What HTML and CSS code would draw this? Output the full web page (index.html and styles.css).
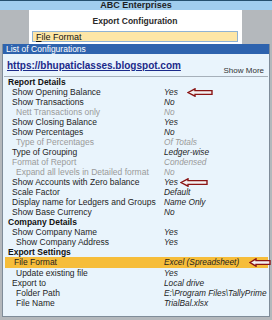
FILE: index.html
```html
<!DOCTYPE html>
<html lang="en">
<head>
  <meta charset="UTF-8">
  <title>Export Configuration</title>
  <link rel="stylesheet" href="styles.css">
</head>
<body>

  <div class="titlebar">ABC Enterprises</div>

  <div class="top">
    <div class="dialog">
      <div class="dialog-title">Export Configuration</div>
      <div class="field"><u>F</u>ile Format</div>
    </div>
  </div>

  <div class="list">
    <div class="list-head">List of Configurations</div>
    <div class="list-body">
      <div class="links">
        <a class="blog" href="#">https://bhupaticlasses.blogspot.com</a>
        <span class="more">Show More</span>
      </div>

      <div class="row section"><span>Report Details</span></div>
      <div class="row l1"><span>Show Opening Balance</span><span class="val">Yes</span>
        <svg class="arrow" style="left:184px" width="26" height="9" viewBox="0 0 26 9"><path d="M1 4.5 L8 0.8 L8 2.6 L25 2.6 L25 6.4 L8 6.4 L8 8.2 Z"/></svg>
      </div>
      <div class="row l1"><span>Show Transactions</span><span class="val">No</span></div>
      <div class="row l2 off"><span>Nett Transactions only</span><span class="val">No</span></div>
      <div class="row l1"><span>Show Closing Balance</span><span class="val">Yes</span></div>
      <div class="row l1"><span>Show Percentages</span><span class="val">No</span></div>
      <div class="row l2 off"><span>Type of Percentages</span><span class="val">Of Totals</span></div>
      <div class="row l1"><span>Type of Grouping</span><span class="val">Ledger-wise</span></div>
      <div class="row l1 off"><span>Format of Report</span><span class="val">Condensed</span></div>
      <div class="row l2 off"><span>Expand all levels in Detailed format</span><span class="val">No</span></div>
      <div class="row l1"><span>Show Accounts with Zero balance</span><span class="val">Yes</span>
        <svg class="arrow" style="left:177px" width="28" height="9" viewBox="0 0 28 9"><path d="M1 4.5 L8 0.8 L8 2.6 L27 2.6 L27 6.4 L8 6.4 L8 8.2 Z"/></svg>
      </div>
      <div class="row l1"><span>Scale Factor</span><span class="val">Default</span></div>
      <div class="row l1"><span>Display name for Ledgers and Groups</span><span class="val">Name Only</span></div>
      <div class="row l1"><span>Show Base Currency</span><span class="val">No</span></div>

      <div class="row section"><span>Company Details</span></div>
      <div class="row l1"><span>Show Company Name</span><span class="val">Yes</span></div>
      <div class="row l2"><span>Show Company Address</span><span class="val">Yes</span></div>

      <div class="row section"><span>Export Settings</span></div>
      <div class="row l1 current"><span>File Format</span><span class="val">Excel (Spreadsheet)</span>
        <svg class="arrow" style="left:244px" width="22" height="9" viewBox="0 0 22 9"><path d="M1 4.5 L7 0.8 L7 2.6 L21 2.6 L21 6.4 L7 6.4 L7 8.2 Z"/></svg>
      </div>
      <div class="row l2"><span>Update existing file</span><span class="val">Yes</span></div>
      <div class="row l1"><span>Export to</span><span class="val">Local drive</span></div>
      <div class="row l2"><span>Folder Path</span><span class="val">E:\Program Files\TallyPrime</span></div>
      <div class="row l2"><span>File Name</span><span class="val">TrialBal.xlsx</span></div>
    </div>
  </div>

</body>
</html>
```

FILE: styles.css
```css
body {
  margin: 0;
  width: 272px;
  height: 320px;
  overflow: hidden;
  background: #b4b8bc;
  font-family: 'Liberation Sans', Arial, sans-serif;
  color: #1e1e1e;
}

.titlebar {
  height: 9px;
  border-top: 1px solid #25506e;
  background: #a0cdee;
  font-size: 9px;
  font-weight: bold;
  line-height: 9px;
  text-align: center;
}

.top {
  height: 34px;
  display: flex;
  justify-content: center;
}

.dialog {
  width: 213px;
  margin-left: -1px;
  background: #fff;
  padding: 6px 4px 0 3px;
  box-sizing: border-box;
}

.dialog-title {
  font-size: 8.5px;
  font-weight: bold;
  text-align: center;
  line-height: 10px;
  color: #2a2a2a;
}

.field {
  margin-top: 5px;
  height: 11px;
  border: 1px solid #8fb2d4;
  background: #fde6a6;
  font-size: 9px;
  line-height: 11px;
  padding-left: 3px;
  box-sizing: border-box;
  color: #111;
}

.list {
  margin: 0 2px;
  border: 1px solid #7f8c99;
  border-top: none;
  background: #e9f4fc;
  height: 272px;
}

.list-head {
  height: 10px;
  background: #2e63ae;
  color: #fff;
  font-size: 8.5px;
  line-height: 10px;
  padding-left: 3px;
}

.links {
  height: 22px;
  display: flex;
  justify-content: space-between;
  align-items: flex-end;
  padding: 0 4px 0 3px;
  margin: 0 1px;
  border-bottom: 1px solid #a6b0ba;
}

.blog {
  font-size: 10px;
  font-weight: bold;
  line-height: 13px;
  margin-bottom: 4px;
  color: #1b2a8a;
  text-decoration: underline;
}

.more {
  font-size: 8px;
  line-height: 10px;
  color: #333;
}

.row {
  position: relative;
  display: grid;
  grid-template-columns: 161px 1fr;
  height: 10px;
  font-size: 8.5px;
  line-height: 10px;
  white-space: nowrap;
  margin-right: 1px;
}

.section {
  font-weight: bold;
  padding-left: 5px;
  grid-template-columns: 1fr;
  color: #111;
}

.l1 span:first-child {
  padding-left: 9px;
}

.l2 span:first-child {
  padding-left: 13px;
}

.val {
  font-style: italic;
  font-size: 8.3px;
}

.off {
  color: #9a9a9a;
}

.current {
  background: #f6bd3a;
  margin-left: 2px;
  height: 11px;
  line-height: 11px;
  grid-template-columns: 159px 1fr;
}

.arrow {
  position: absolute;
  top: 0.5px;
}

.arrow path {
  fill: #f3f1f1;
  stroke: #8a1414;
  stroke-width: 1.4;
}
```
